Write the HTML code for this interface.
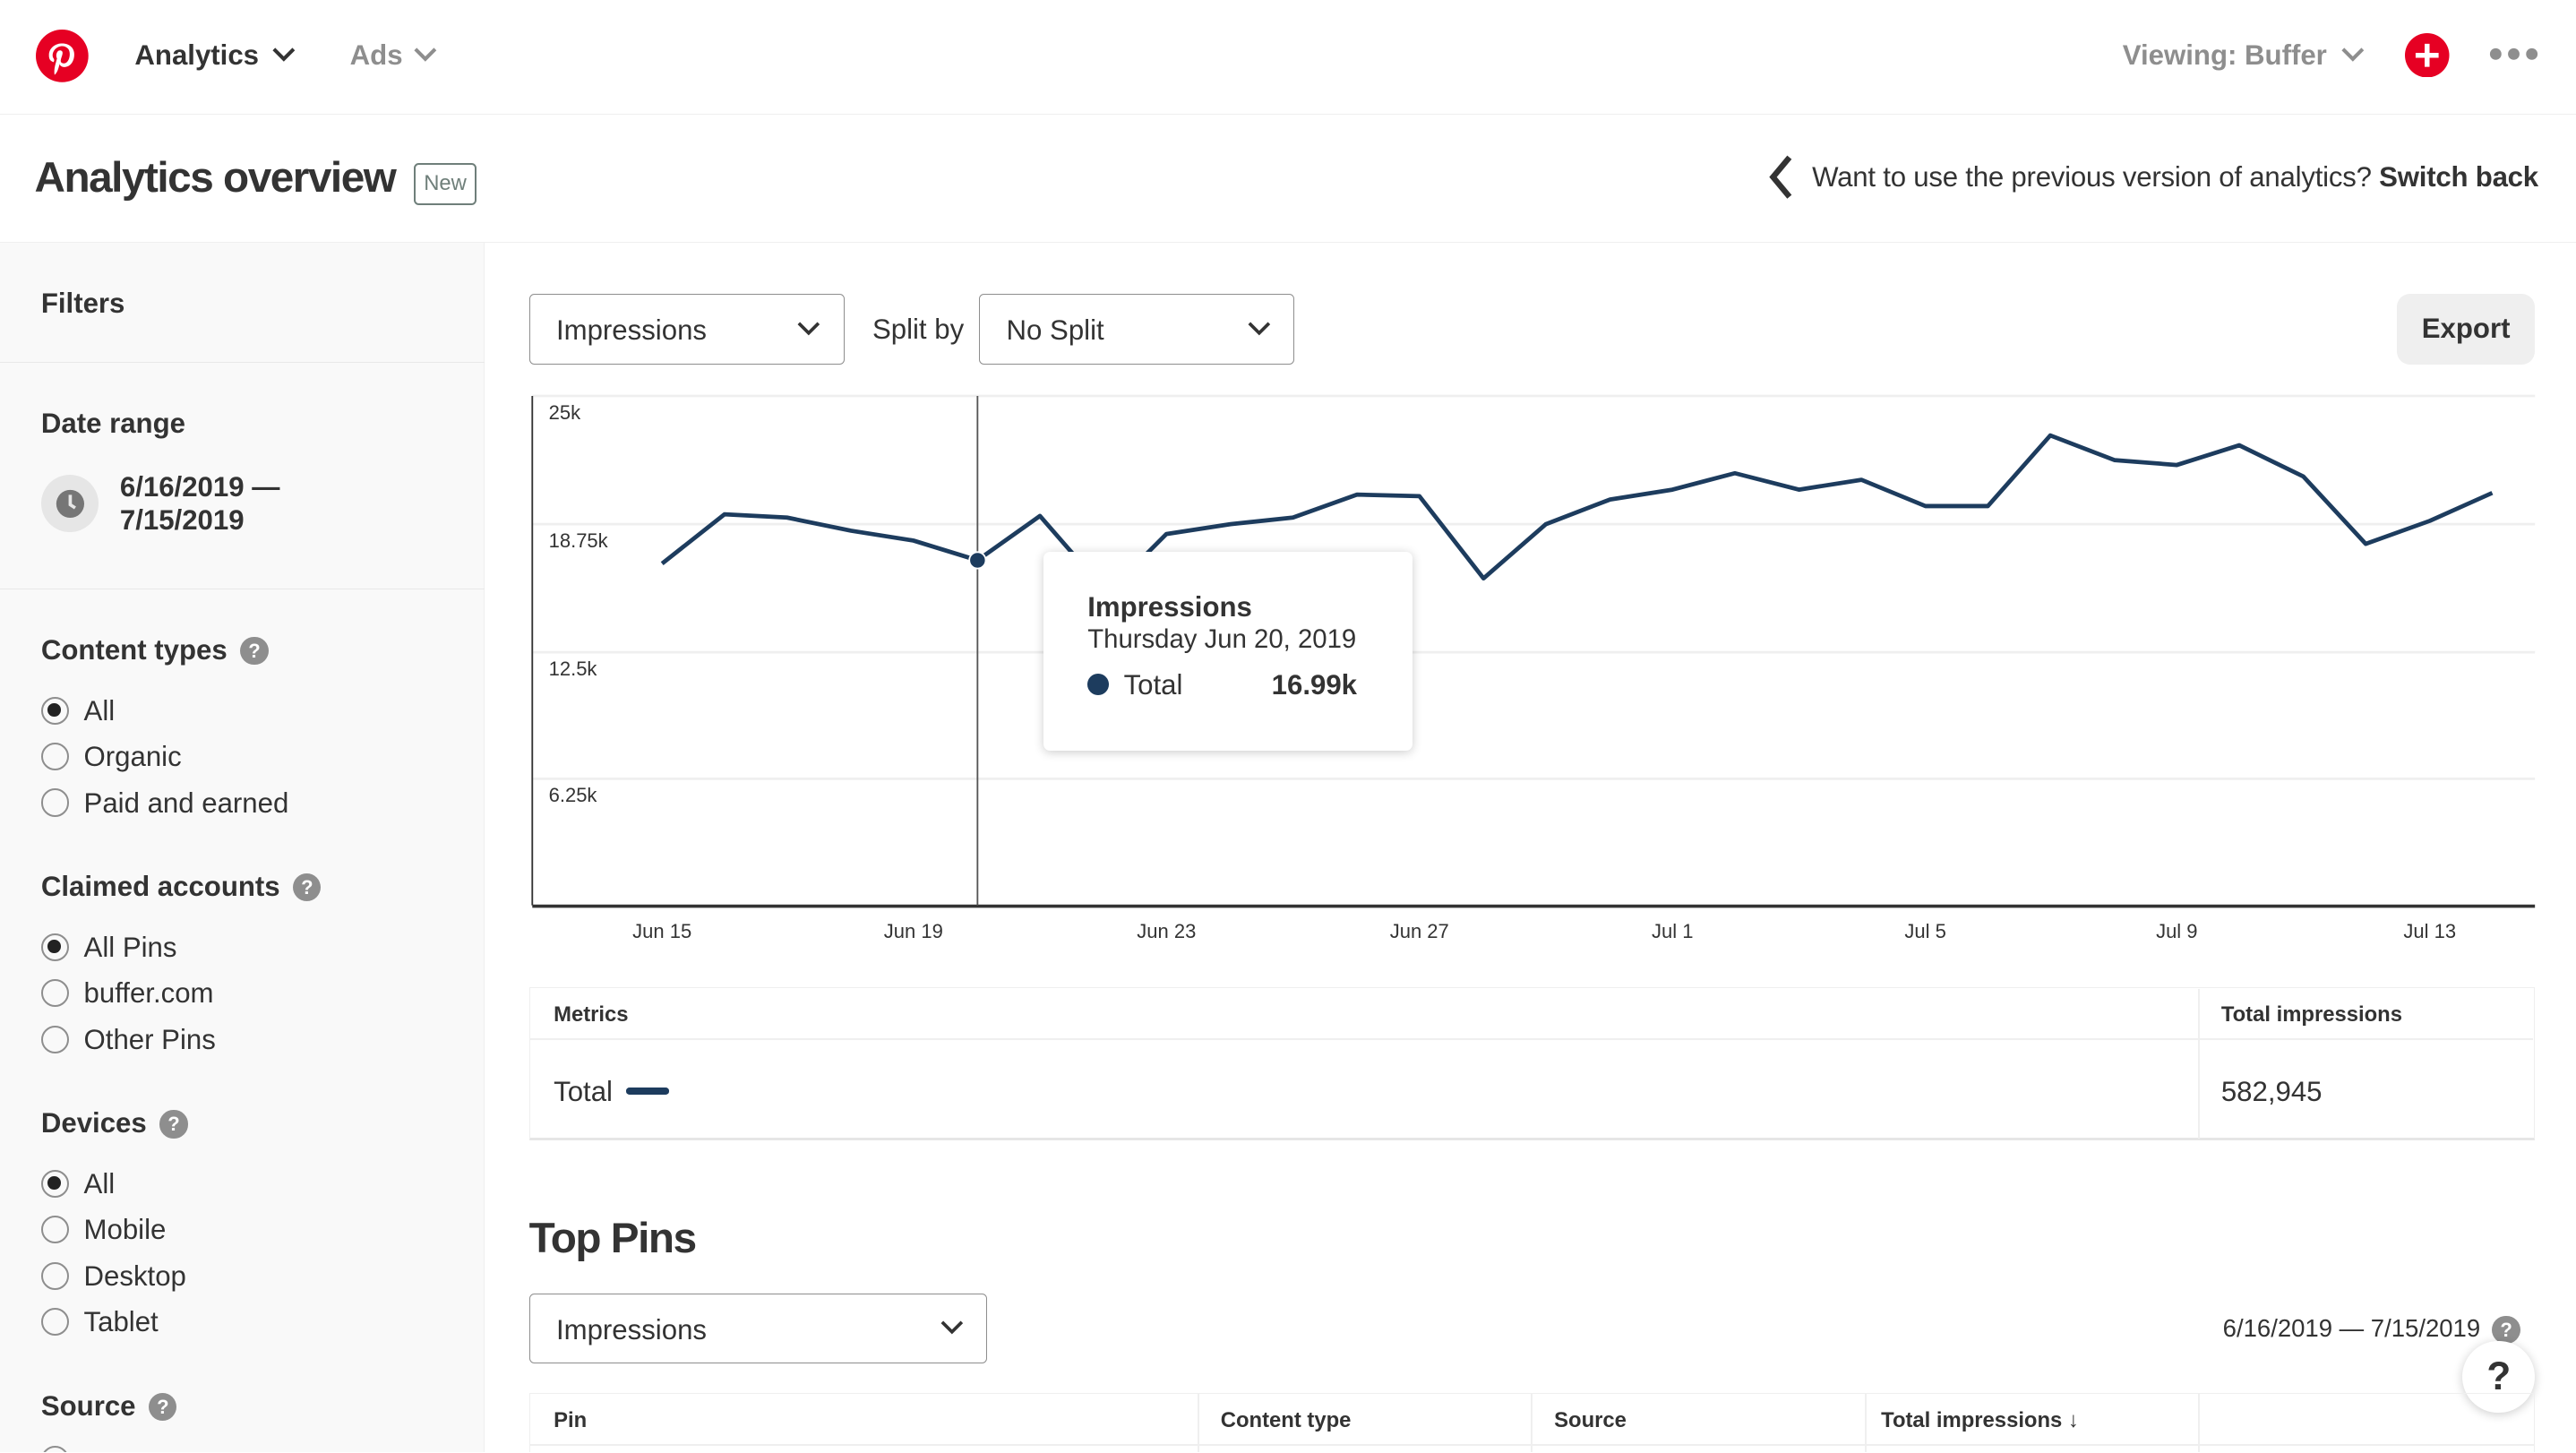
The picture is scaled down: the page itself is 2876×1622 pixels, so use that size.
<!DOCTYPE html>
<html><head><meta charset="utf-8"><style>
*{box-sizing:border-box;margin:0;padding:0}
html,body{width:2876px;height:1622px;overflow:hidden;background:#fff}
#w{zoom:1.8342;width:1568px;height:884px;position:relative;font-family:"Liberation Sans",Arial,sans-serif;color:#333;overflow:hidden}
.a{position:absolute}
.b{font-weight:bold}
.dd{position:absolute;border:1px solid #8e8e8e;border-radius:3px;height:43px;font-size:17px;color:#333;padding:12px 16px}
.dd svg{position:absolute;right:14px;top:16px}
.r{position:absolute;left:25px;width:17px;height:17px;border:1.5px solid #8e8e8e;border-radius:50%}
.r.on::after{content:"";position:absolute;left:3px;top:3px;width:8px;height:8px;border-radius:50%;background:#222}
.rl{position:absolute;left:51px;font-size:17px;color:#333}
.sh{position:absolute;left:25px;font-size:17px;font-weight:bold;color:#333}
.q{display:inline-block;width:17px;height:17px;border-radius:50%;background:#8e8e8e;color:#fff;font-size:12px;text-align:center;line-height:17px;margin-left:8px;vertical-align:1px}
.yl{position:absolute;left:334px;font-size:12px;color:#333}
.xl{position:absolute;top:560px;font-size:12px;color:#333;transform:translateX(-50%)}
</style></head><body><div id="w">
<svg class="a" style="left:22px;top:18px" width="32" height="32" viewBox="0 0 32 32"><circle cx="16" cy="16" r="16" fill="#e60023"/><path d="M14.5 20.5c-.6 3-1.3 5.6-3.1 7.1-.6-4 .8-7 1.5-10.1-1.1-1.9.1-5.6 2.5-4.7 2.9 1.2-2.6 7 1.1 7.7 3.9.8 5.4-6.6 3-9-3.4-3.5-10-.1-9.2 5 .2 1.2 1.5 1.6.5 3.3-2.2-.5-2.9-2.2-2.8-4.5.1-3.8 3.4-6.4 6.7-6.8 4.2-.5 8.1 1.5 8.6 5.5.6 4.4-1.9 9.2-6.4 8.8-1.2-.1-1.7-.7-2.4-1.3z" fill="#fff"/></svg>
<div class="a b" style="left:82px;top:24px;font-size:17px;color:#333">Analytics</div>
<svg class="a" style="left:166px;top:29px" width="14" height="9"><path d="M1 1l6 6 6-6" stroke="#333" stroke-width="2.2" fill="none"/></svg>
<div class="a b" style="left:213px;top:24px;font-size:17px;color:#8e8e8e">Ads</div>
<svg class="a" style="left:252px;top:29px" width="14" height="9"><path d="M1 1l6 6 6-6" stroke="#8e8e8e" stroke-width="2.2" fill="none"/></svg>
<div class="a b" style="left:1292px;top:24px;font-size:17px;color:#8e8e8e">Viewing: Buffer</div>
<svg class="a" style="left:1425px;top:29px" width="14" height="9"><path d="M1 1l6 6 6-6" stroke="#8e8e8e" stroke-width="2.2" fill="none"/></svg>
<svg class="a" style="left:1464px;top:20px" width="27" height="27"><circle cx="13.5" cy="13.5" r="13.5" fill="#e60023"/><path d="M13.5 6.5v14M6.5 13.5h14" stroke="#fff" stroke-width="3"/></svg>
<svg class="a" style="left:1515px;top:29px" width="30" height="8"><circle cx="4" cy="4" r="3.5" fill="#8e8e8e"/><circle cx="15" cy="4" r="3.5" fill="#8e8e8e"/><circle cx="26" cy="4" r="3.5" fill="#8e8e8e"/></svg>
<div class="a" style="left:0;top:69px;width:1568px;height:1px;background:#efefef"></div>
<div class="a b" style="left:21px;top:93px;font-size:26px;color:#333;letter-spacing:-0.8px">Analytics overview</div>
<div class="a" style="left:252px;top:99px;width:38px;height:26px;border:1.5px solid #6f7f7a;border-radius:3px;font-size:13px;color:#6f7f7a;text-align:center;line-height:23px">New</div>
<svg class="a" style="left:1076px;top:94px" width="16" height="28"><path d="M13 2L3 14l10 12" stroke="#333" stroke-width="3.5" fill="none"/></svg>
<div class="a" style="left:1103px;top:98px;font-size:17px;color:#333;letter-spacing:-0.12px">Want to use the previous version of analytics? <b>Switch back</b></div>
<div class="a" style="left:0;top:147px;width:1568px;height:1px;background:#efefef"></div>
<div class="a" style="left:0;top:148px;width:295px;height:736px;background:#f9f9f9;border-right:1px solid #efefef"></div>
<div class="sh" style="top:175px">Filters</div>
<div class="a" style="left:0;top:220px;width:295px;height:1px;background:#e8e8e8"></div>
<div class="sh" style="top:248px">Date range</div>
<div class="a" style="left:25px;top:289px;width:35px;height:35px;border-radius:50%;background:#e6e6e6"></div>
<svg class="a" style="left:33px;top:297px" width="19" height="19"><circle cx="9.5" cy="9.5" r="8.5" fill="#767676"/><path d="M9.5 4v6l3 2" stroke="#e6e6e6" stroke-width="2" fill="none"/></svg>
<div class="a b" style="left:73px;top:287px;font-size:17px;line-height:20px;color:#333">6/16/2019 —<br>7/15/2019</div>
<div class="a" style="left:0;top:358px;width:295px;height:1px;background:#e8e8e8"></div>
<div class="sh" style="top:386px">Content types<span class="q">?</span></div>
<div class="r on" style="top:424px"></div><div class="rl" style="top:423px">All</div>
<div class="r" style="top:452px"></div><div class="rl" style="top:451px">Organic</div>
<div class="r" style="top:480px"></div><div class="rl" style="top:479px">Paid and earned</div>
<div class="sh" style="top:530px">Claimed accounts<span class="q">?</span></div>
<div class="r on" style="top:568px"></div><div class="rl" style="top:567px">All Pins</div>
<div class="r" style="top:596px"></div><div class="rl" style="top:595px">buffer.com</div>
<div class="r" style="top:624px"></div><div class="rl" style="top:623px">Other Pins</div>
<div class="sh" style="top:674px">Devices<span class="q">?</span></div>
<div class="r on" style="top:712px"></div><div class="rl" style="top:711px">All</div>
<div class="r" style="top:740px"></div><div class="rl" style="top:739px">Mobile</div>
<div class="r" style="top:768px"></div><div class="rl" style="top:767px">Desktop</div>
<div class="r" style="top:796px"></div><div class="rl" style="top:795px">Tablet</div>
<div class="sh" style="top:846px">Source<span class="q">?</span></div>
<div class="r" style="top:880px"></div>
<div class="dd" style="left:322px;top:179px;width:192px">Impressions<svg width="14" height="9"><path d="M1 1l6 6 6-6" stroke="#333" stroke-width="2" fill="none"/></svg></div>
<div class="a" style="left:531px;top:191px;font-size:17px">Split by</div>
<div class="dd" style="left:596px;top:179px;width:192px">No Split<svg width="14" height="9"><path d="M1 1l6 6 6-6" stroke="#333" stroke-width="2" fill="none"/></svg></div>
<div class="a b" style="left:1459px;top:179px;width:84px;height:43px;border-radius:8px;background:#efefef;font-size:17px;text-align:center;line-height:43px">Export</div>
<svg class="a" style="left:0;top:0" width="1568" height="884">
<g stroke="#efefef" stroke-width="1.5"><path d="M324 241H1543M324 319H1543M324 397H1543M324 474H1543"/></g>
<path d="M324 241V551" stroke="#333" stroke-width="1"/>
<path d="M324 551.5H1543" stroke="#333" stroke-width="2"/>
<path d="M595 241V551" stroke="#555" stroke-width="1"/>
<polyline fill="none" stroke="#1d3c5e" stroke-width="2.6" stroke-linejoin="round" points="403,343 441,313 479,315 518,323 556,329 595,341 633,314 660,345 690,345 710,325 749,319 787,315 826,301 864,302 903,352 941,319 980,304 1018,298 1056,288 1095,298 1133,292 1172,308 1210,308 1248,265 1287,280 1325,283 1363,271 1402,290 1440,331 1479,317 1517,300"/>
<circle cx="595" cy="341" r="5" fill="#1d3c5e" stroke="#fff" stroke-width="1"/>
</svg>
<div class="yl" style="top:244px">25k</div>
<div class="yl" style="top:322px">18.75k</div>
<div class="yl" style="top:400px">12.5k</div>
<div class="yl" style="top:477px">6.25k</div>
<div class="xl" style="left:403px">Jun 15</div><div class="xl" style="left:556px">Jun 19</div><div class="xl" style="left:710px">Jun 23</div><div class="xl" style="left:864px">Jun 27</div><div class="xl" style="left:1018px">Jul 1</div><div class="xl" style="left:1172px">Jul 5</div><div class="xl" style="left:1325px">Jul 9</div><div class="xl" style="left:1479px">Jul 13</div>
<div class="a" style="left:635px;top:336px;width:225px;height:121px;background:#fff;border-radius:4px;box-shadow:0 1px 6px rgba(0,0,0,.2)">
<div class="a b" style="left:27px;top:24px;font-size:17px">Impressions</div>
<div class="a" style="left:27px;top:44px;font-size:16px">Thursday Jun 20, 2019</div>
<div class="a" style="left:27px;top:74px;width:13px;height:13px;border-radius:50%;background:#1d3c5e"></div>
<div class="a" style="left:49px;top:71px;font-size:17px">Total</div>
<div class="a b" style="left:139px;top:71px;font-size:17px">16.99k</div>
</div>
<div class="a" style="left:322px;top:601px;width:1221px;height:93px;border:1px solid #efefef;border-bottom:2px solid #e6e6e6"></div>
<div class="a" style="left:323px;top:632px;width:1219px;height:1px;background:#efefef"></div>
<div class="a" style="left:1338px;top:602px;width:1px;height:91px;background:#efefef"></div>
<div class="a b" style="left:337px;top:610px;font-size:13px">Metrics</div>
<div class="a b" style="left:1352px;top:610px;font-size:13px">Total impressions</div>
<div class="a" style="left:337px;top:655px;font-size:17px">Total</div>
<div class="a" style="left:381px;top:662px;width:26px;height:4px;border-radius:2px;background:#1d3c5e"></div>
<div class="a" style="left:1352px;top:655px;font-size:17px">582,945</div>
<div class="a b" style="left:322px;top:739px;font-size:26px;letter-spacing:-0.8px">Top Pins</div>
<div class="dd" style="left:322px;top:787px;width:279px">Impressions<svg width="14" height="9"><path d="M1 1l6 6 6-6" stroke="#333" stroke-width="2" fill="none"/></svg></div>
<div class="a" style="left:1353px;top:800px;font-size:15px">6/16/2019 — 7/15/2019</div>
<div class="a" style="left:1517px;top:801px;width:17px;height:17px;border-radius:50%;background:#8e8e8e;color:#fff;font-size:12px;text-align:center;line-height:17px;font-weight:bold">?</div>
<div class="a b" style="left:1499px;top:816px;width:44px;height:44px;border-radius:50%;background:#fff;box-shadow:0 1px 6px rgba(0,0,0,.2);font-size:24px;text-align:center;line-height:44px;color:#333">?</div>
<div class="a" style="left:322px;top:848px;width:1221px;height:40px;border:1px solid #efefef"></div>
<div class="a" style="left:322px;top:879px;width:1221px;height:1px;background:#efefef"></div>
<div class="a" style="left:729px;top:848px;width:1px;height:36px;background:#efefef"></div>
<div class="a" style="left:932px;top:848px;width:1px;height:36px;background:#efefef"></div>
<div class="a" style="left:1135px;top:848px;width:1px;height:36px;background:#efefef"></div>
<div class="a" style="left:1338px;top:848px;width:1px;height:36px;background:#efefef"></div>
<div class="a b" style="left:337px;top:857px;font-size:13px">Pin</div>
<div class="a b" style="left:743px;top:857px;font-size:13px">Content type</div>
<div class="a b" style="left:946px;top:857px;font-size:13px">Source</div>
<div class="a b" style="left:1145px;top:857px;font-size:13px">Total impressions ↓</div>
</div></body></html>
